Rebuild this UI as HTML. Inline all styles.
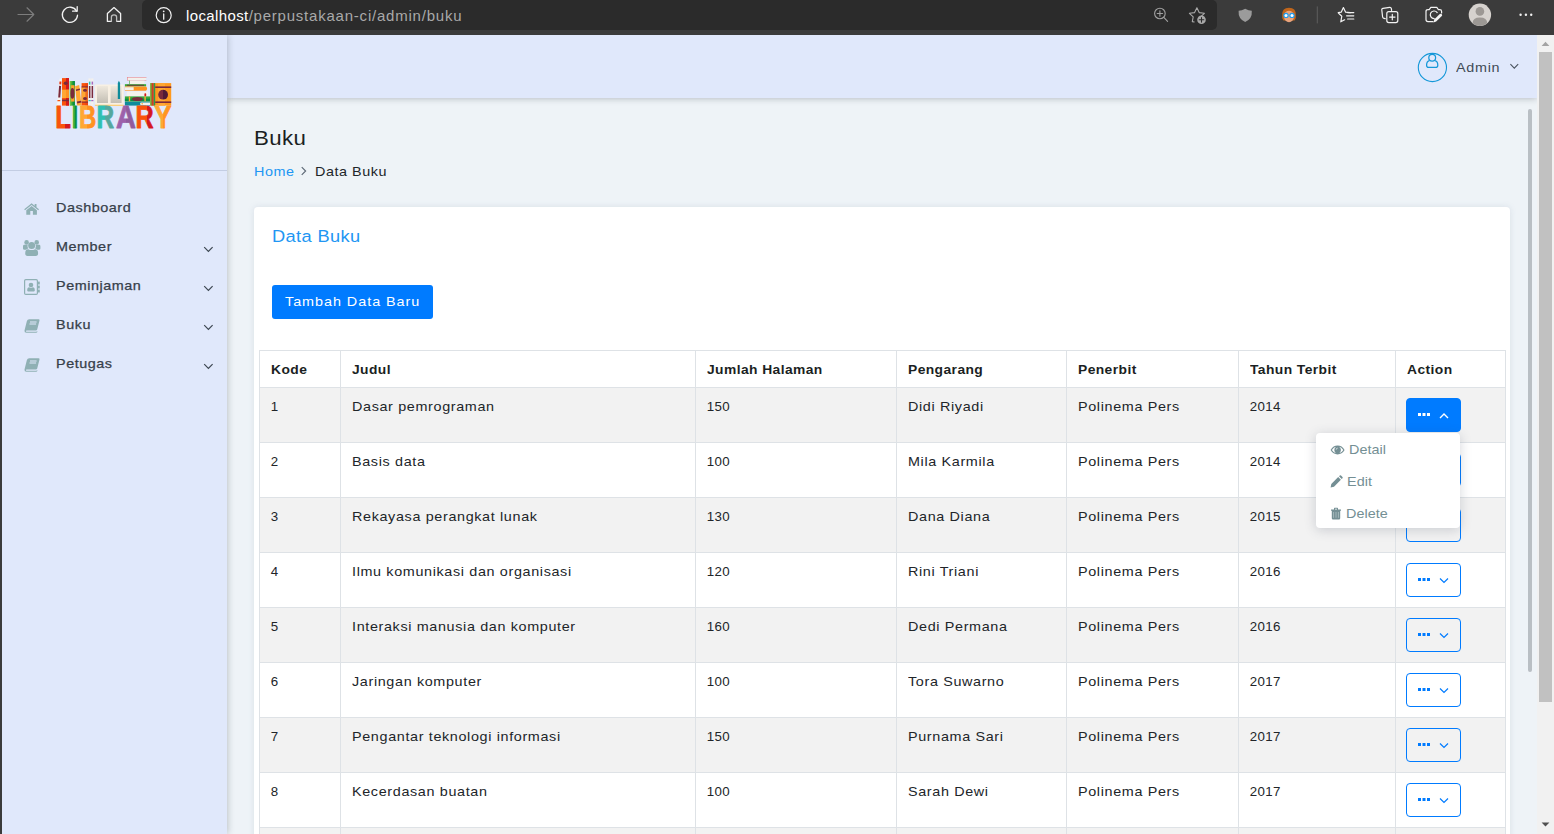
<!DOCTYPE html>
<html lang="id">
<head>
<meta charset="utf-8">
<title>Buku - Perpustakaan</title>
<style>
*{box-sizing:border-box;margin:0;padding:0}
html,body{width:1554px;height:834px;overflow:hidden;background:#eef3f7}
body{font-family:"Liberation Sans",sans-serif;font-size:13.3px;color:#212529;letter-spacing:1.1px;position:relative}
.abs{position:absolute}
/* browser chrome */
#chrome{left:0;top:0;width:1554px;height:35px;background:#3b3b3b}
#addr{left:142px;top:0;width:1075px;height:30px;background:#2b2b2b;border-radius:5px}
#url{left:186px;top:6.5px;font-size:15px;letter-spacing:.78px;color:#a9a9a9;line-height:18px;white-space:nowrap}
#url b{font-weight:normal;color:#fff;letter-spacing:.38px}
#lborder{left:0;top:0;width:2px;height:834px;background:#3b3b3b}
/* sidebar */
#sidebar{left:2px;top:35px;width:225px;height:799px;background:#e0e8fb;box-shadow:0 0 7px rgba(30,40,50,.3)}
#sideline{left:2px;top:170px;width:225px;height:1px;background:#c3cde3}
.mi{left:56px;font-size:13px;font-weight:normal;color:#37404a;letter-spacing:.5px;line-height:20px;white-space:nowrap;-webkit-text-stroke:.25px #37404a}
.mi.w{transform:scaleX(1.105)}
/* header */
#header{left:227px;top:35px;width:1310px;height:63px;background:#e0e8fb;box-shadow:0 0 7px rgba(30,40,50,.32)}
#admin{left:1456px;top:59px;font-size:13.3px;color:#414b55;letter-spacing:.65px;line-height:18px}
/* scrollbars */
#sb{left:1537px;top:35px;width:17px;height:799px;background:#f1f1f1}
#sbthumb{left:1539px;top:52px;width:13px;height:650px;background:#c1c1c1}
#isb{left:1528px;top:109px;width:4px;height:563px;background:#b9bfc4;border-radius:2px}
/* content */
#title{left:254px;top:124px;font-size:20.6px;line-height:28px;color:#1b1f23;letter-spacing:.4px}
#bc{left:254px;top:163px;font-size:13.3px;line-height:18px;white-space:nowrap;letter-spacing:.5px}
#bc a{color:#2196f3;text-decoration:none}
#card{left:254px;top:207px;width:1256px;height:640px;background:#fff;border-radius:4px;box-shadow:0 0 6px rgba(120,140,160,.18)}
#ctitle{left:272px;top:226px;font-size:16.9px;line-height:22px;color:#2196f3;letter-spacing:.35px}
#addbtn{left:272px;top:285px;width:161px;height:34px;background:#007bff;border-radius:3px;color:#fff;font-size:13.3px;letter-spacing:.9px;line-height:34px;text-align:center;white-space:nowrap;padding-left:1px}
table{position:absolute;left:259px;top:350px;width:1247px;border-collapse:collapse;table-layout:fixed}
th,td{border:1px solid #dee2e6;vertical-align:top;text-align:left;padding:8px 0 0 11px;white-space:nowrap;line-height:21px;color:#212529}
th{height:37px;font-weight:bold;letter-spacing:.75px;color:#1b1f23}
td{height:55px;padding-left:10.8px}
tbody tr:nth-child(odd) td{background:#f2f2f2}
.btn{width:55px;height:34px;border:1px solid #007bff;border-radius:4px;left:1406px;background:transparent}
.btn.on{background:#007bff}
.btn svg{position:absolute;left:-1px;top:-1px}
#dd{left:1316px;top:433px;width:144px;height:95px;background:#fff;border-radius:4px;box-shadow:0 2px 12px rgba(60,70,90,.22)}
.di{font-size:13.3px;color:#748f94;letter-spacing:.05px;line-height:18px;white-space:nowrap}

td>span{display:inline-block;transform:scaleX(1.08);transform-origin:0 50%;letter-spacing:.6px}
td>span.n{transform:none;letter-spacing:.3px}
th>span{display:inline-block;transform:scaleX(1.04);transform-origin:0 50%;letter-spacing:.4px}
.w{transform:scaleX(1.08);transform-origin:0 50%}
#addbtn span{display:inline-block;transform:scaleX(1.08);transform-origin:50% 50%}
</style>
</head>
<body>
<!-- content area -->
<div class="abs w" id="title">Buku</div>
<div class="abs w" id="bc"><a>Home</a><svg width="19" height="12" viewBox="1 0 19 12" style="vertical-align:-1px"><path d="M8.2 2.2 L11.8 6 L8.2 9.8" fill="none" stroke="#5f6b78" stroke-width="1.1"/></svg><span>Data Buku</span></div>
<div class="abs" id="card"></div>
<div class="abs w" id="ctitle">Data Buku</div>
<div class="abs" id="addbtn"><span>Tambah Data Baru</span></div>

<table>
<colgroup><col style="width:81px"><col style="width:355px"><col style="width:201px"><col style="width:170px"><col style="width:172px"><col style="width:157px"><col style="width:110px"></colgroup>
<thead><tr><th><span>Kode</span></th><th><span>Judul</span></th><th><span>Jumlah Halaman</span></th><th><span>Pengarang</span></th><th><span>Penerbit</span></th><th><span>Tahun Terbit</span></th><th><span>Action</span></th></tr></thead>
<tbody>
<tr><td><span class="n">1</span></td><td><span>Dasar pemrograman</span></td><td><span class="n">150</span></td><td><span>Didi Riyadi</span></td><td><span>Polinema Pers</span></td><td><span class="n">2014</span></td><td></td></tr>
<tr><td><span class="n">2</span></td><td><span>Basis data</span></td><td><span class="n">100</span></td><td><span>Mila Karmila</span></td><td><span>Polinema Pers</span></td><td><span class="n">2014</span></td><td></td></tr>
<tr><td><span class="n">3</span></td><td><span>Rekayasa perangkat lunak</span></td><td><span class="n">130</span></td><td><span>Dana Diana</span></td><td><span>Polinema Pers</span></td><td><span class="n">2015</span></td><td></td></tr>
<tr><td><span class="n">4</span></td><td><span>Ilmu komunikasi dan organisasi</span></td><td><span class="n">120</span></td><td><span>Rini Triani</span></td><td><span>Polinema Pers</span></td><td><span class="n">2016</span></td><td></td></tr>
<tr><td><span class="n">5</span></td><td><span>Interaksi manusia dan komputer</span></td><td><span class="n">160</span></td><td><span>Dedi Permana</span></td><td><span>Polinema Pers</span></td><td><span class="n">2016</span></td><td></td></tr>
<tr><td><span class="n">6</span></td><td><span>Jaringan komputer</span></td><td><span class="n">100</span></td><td><span>Tora Suwarno</span></td><td><span>Polinema Pers</span></td><td><span class="n">2017</span></td><td></td></tr>
<tr><td><span class="n">7</span></td><td><span>Pengantar teknologi informasi</span></td><td><span class="n">150</span></td><td><span>Purnama Sari</span></td><td><span>Polinema Pers</span></td><td><span class="n">2017</span></td><td></td></tr>
<tr><td><span class="n">8</span></td><td><span>Kecerdasan buatan</span></td><td><span class="n">100</span></td><td><span>Sarah Dewi</span></td><td><span>Polinema Pers</span></td><td><span class="n">2017</span></td><td></td></tr>
<tr><td><span class="n">9</span></td><td></td><td></td><td></td><td></td><td></td><td></td></tr>
</tbody>
</table>

<!-- action buttons -->
<div class="abs btn on" style="top:398px"><svg width="55" height="34"><path d="M12 15h3v3h-3zM16.5 15h3v3h-3zM21 15h3v3h-3z" fill="#fff"/><path d="M34 20 L38 16 L42 20" fill="none" stroke="#fff" stroke-width="1.4"/></svg></div>
<div class="abs btn" style="top:453px"></div>
<div class="abs btn" style="top:508px"></div>
<div class="abs btn" style="top:563px"><svg width="55" height="34"><path d="M12 15h3v3h-3zM16.5 15h3v3h-3zM21 15h3v3h-3z" fill="#007bff"/><path d="M34 15.5 L38 19.5 L42 15.5" fill="none" stroke="#007bff" stroke-width="1.2"/></svg></div>
<div class="abs btn" style="top:618px"><svg width="55" height="34"><path d="M12 15h3v3h-3zM16.5 15h3v3h-3zM21 15h3v3h-3z" fill="#007bff"/><path d="M34 15.5 L38 19.5 L42 15.5" fill="none" stroke="#007bff" stroke-width="1.2"/></svg></div>
<div class="abs btn" style="top:673px"><svg width="55" height="34"><path d="M12 15h3v3h-3zM16.5 15h3v3h-3zM21 15h3v3h-3z" fill="#007bff"/><path d="M34 15.5 L38 19.5 L42 15.5" fill="none" stroke="#007bff" stroke-width="1.2"/></svg></div>
<div class="abs btn" style="top:728px"><svg width="55" height="34"><path d="M12 15h3v3h-3zM16.5 15h3v3h-3zM21 15h3v3h-3z" fill="#007bff"/><path d="M34 15.5 L38 19.5 L42 15.5" fill="none" stroke="#007bff" stroke-width="1.2"/></svg></div>
<div class="abs btn" style="top:783px"><svg width="55" height="34"><path d="M12 15h3v3h-3zM16.5 15h3v3h-3zM21 15h3v3h-3z" fill="#007bff"/><path d="M34 15.5 L38 19.5 L42 15.5" fill="none" stroke="#007bff" stroke-width="1.2"/></svg></div>

<!-- dropdown -->
<div class="abs" id="dd"></div>
<div class="abs di w" style="left:1349px;top:441px">Detail</div>
<div class="abs di w" style="left:1347px;top:473px">Edit</div>
<div class="abs di w" style="left:1346px;top:505px">Delete</div>

<svg class="abs" style="left:1330px;top:445px" width="16" height="10" viewBox="0 0 16 10"><path d="M0.6 5 Q3.2 0.6 7.6 0.6 Q12 0.6 14.6 5 Q12 9.400 7.600 9.400 Q3.200 9.400 0.600 5 Z" fill="#748f94"/><path d="M1.900 5 Q3.800 2 6 1.700 Q4.300 3 4.300 5 Q4.300 7 6 8.300 Q3.800 8 1.900 5 Z M13.300 5 Q11.400 2 9.200 1.700 Q10.900 3 10.900 5 Q10.900 7 9.200 8.300 Q11.400 8 13.300 5 Z" fill="#fff"/><circle cx="7.600" cy="5" r="2.600" fill="#748f94"/><path d="M6.200 4.600 Q6.400 3.200 7.600 3.100" fill="none" stroke="#fff" stroke-width=".7"/></svg>
<svg class="abs" style="left:1330px;top:475px" width="13" height="13" viewBox="0 0 13 13"><path d="M0.600 12.400 L1.300 9 L8.200 2.100 L10.900 4.800 L4 11.700 Z M9 1.300 L9.800 0.500 Q10.400 0 11 0.500 L12.500 2 Q13 2.600 12.500 3.200 L11.700 4 Z" fill="#748f94"/></svg>
<svg class="abs" style="left:1330px;top:507px" width="12" height="13" viewBox="0 0 12 13"><path d="M1 2.600 H4 V1.400 Q4 0.800 4.600 0.800 H7.400 Q8 0.800 8 1.400 V2.600 H11 V3.800 H10.200 V11.200 Q10.200 12.400 9 12.400 H3 Q1.800 12.400 1.800 11.200 V3.800 H1 Z M5 1.700 V2.600 H7 V1.700 Z" fill="#748f94"/><path d="M3.600 5 V10.800 M6 5 V10.800 M8.400 5 V10.800" stroke="#a9bcc0" stroke-width=".9" fill="none"/></svg>

<!-- header -->
<div class="abs" id="header"></div>
<div class="abs w" id="admin">Admin</div>

<svg class="abs" style="left:1417px;top:52px" width="31" height="31" viewBox="0 0 31 31"><circle cx="15.4" cy="15.5" r="14.1" fill="none" stroke="#1497d8" stroke-width="1.1"/><circle cx="15.2" cy="5.8" r="3.4" fill="none" stroke="#1497d8" stroke-width="1.25"/><path d="M12.3 8.6 Q9.6 9.4 9.6 13.2 Q9.6 15.4 11.6 15.4 H18.8 Q20.8 15.4 20.8 13.2 Q20.8 9.4 18.1 8.6" fill="none" stroke="#1497d8" stroke-width="1.25"/></svg>
<svg class="abs" style="left:1509px;top:63px" width="11" height="7"><path d="M1.4 1.2 L5.3 5.1 L9.2 1.2" fill="none" stroke="#4a535e" stroke-width="1.1"/></svg>

<!-- sidebar -->
<div class="abs" id="sidebar"></div>
<div class="abs" id="sideline"></div>
<div class="abs mi w" style="top:198px">Dashboard</div>
<div class="abs mi w" style="top:237px">Member</div>
<div class="abs mi w" style="top:276px">Peminjaman</div>
<div class="abs mi w" style="top:315px">Buku</div>
<div class="abs mi w" style="top:354px">Petugas</div>



<!-- logo -->
<svg class="abs" style="left:52px;top:72px" width="124" height="60" viewBox="52 72 124 60">
<defs>
<linearGradient id="gL"><stop offset="62%" stop-color="#f9530b"/><stop offset="62%" stop-color="#d4191d"/></linearGradient>
<linearGradient id="gI"><stop offset="25%" stop-color="#8fce5a"/><stop offset="25%" stop-color="#3aaa35"/><stop offset="60%" stop-color="#3aaa35"/><stop offset="60%" stop-color="#0b8f44"/></linearGradient>
<linearGradient id="gB"><stop offset="48%" stop-color="#ffa733"/><stop offset="48%" stop-color="#ff9220"/></linearGradient>
<linearGradient id="gR"><stop offset="48%" stop-color="#2fbfb3"/><stop offset="48%" stop-color="#55a79e"/></linearGradient>
<linearGradient id="gA"><stop offset="50%" stop-color="#9d61ab"/><stop offset="50%" stop-color="#915c9d"/></linearGradient>
<linearGradient id="gY"><stop offset="50%" stop-color="#ffa733"/><stop offset="50%" stop-color="#ff9422"/></linearGradient>
<linearGradient id="gP" x1="0" y1="0" x2="0" y2="1"><stop offset="0" stop-color="#efe9dd"/><stop offset="1" stop-color="#c3beb4"/></linearGradient>
<linearGradient id="gC"><stop offset="50%" stop-color="#7a2a3c"/><stop offset="50%" stop-color="#511a36"/></linearGradient>
</defs>
<!-- books row -->
<path d="M59.6 78.4 L61.7 78.6 L60 105.600 H57 Z" fill="#f6f3ee"/><path d="M59.100 85.800 L61.100 86 L60.300 97.600 L58.200 97.600 Z" fill="#7a2a3c"/><path d="M59.500 81.400 L61.400 81.600 L61.200 84.400 L59.300 84.200 Z" fill="#e2381c"/><path d="M57.500 100 L60.300 100 L60.200 101.300 L57.400 101.300 Z" fill="#f9530b"/>
<rect x="62" y="78.1" width="7" height="27.5" fill="#f9530b"/><rect x="66" y="78.1" width="3" height="27.5" fill="#d4191d"/><rect x="62" y="89.7" width="7" height="8.3" fill="#ffa733"/><rect x="66" y="89.7" width="3" height="8.3" fill="#ff9220"/><ellipse cx="65.7" cy="83.3" rx="2" ry="1.7" fill="#7a2a3c"/><rect x="62" y="99.6" width="7" height="1.6" fill="#7a2a3c"/>
<rect x="69.8" y="81.1" width="5.1" height="24.5" fill="#3aaa35"/><rect x="72.6" y="81.1" width="2.3" height="24.5" fill="#0b8f44"/><rect x="70.500" y="85.200" width="4" height="16.400" fill="#ffa028"/><rect x="69.800" y="81.100" width="1.500" height="24.500" fill="#7fc74f" opacity=".7"/><ellipse cx="72.400" cy="93.400" rx="2" ry="5.400" fill="#7a2a3c"/>
<path d="M75.1 86.2 L79.2 85 L81.6 105.6 H77 Z" fill="#ffa733"/><path d="M75.9 89.6 L79.8 88.6 L80 90 L76.1 91 Z M77 101.6 L81.2 100.8 L81.4 102.6 L77.2 103.4 Z" fill="#7a2a3c"/>
<rect x="81.6" y="83.1" width="6.4" height="22.5" fill="#f9530b"/><rect x="81.6" y="87.4" width="6.4" height="14.2" fill="#ffa733"/><rect x="85.4" y="83.1" width="2.6" height="22.5" fill="#e23a12" opacity=".55"/><ellipse cx="85" cy="90.2" rx="2" ry="1.5" fill="#7a2a3c"/><ellipse cx="85" cy="98.4" rx="2" ry="1.5" fill="#7a2a3c"/><rect x="81.6" y="86.4" width="6.4" height="1" fill="#7a2a3c"/><rect x="81.6" y="101.6" width="6.4" height="1" fill="#7a2a3c"/>
<rect x="88.5" y="78.4" width="2.2" height="27.2" fill="#f4f1ec"/><rect x="91.2" y="78.4" width="2.2" height="27.2" fill="#f4f1ec"/><rect x="88.9" y="86" width="1.5" height="12" fill="#7a2a3c"/><rect x="91.6" y="86" width="1.5" height="12" fill="#7a2a3c"/><rect x="88.9" y="81.6" width="1.5" height="3" fill="#2fbfb3"/><rect x="91.6" y="81.6" width="1.5" height="3" fill="#a56bc0"/><rect x="88.5" y="100" width="2.2" height="1.2" fill="#2fbfb3"/><rect x="91.2" y="100" width="2.2" height="1.2" fill="#a56bc0"/>
<!-- open book -->
<rect x="94.9" y="84.4" width="28.8" height="21.2" rx="1" fill="#f8f0e3"/><rect x="94.9" y="104.8" width="28.8" height="0.9" fill="#ffc44d"/><rect x="97" y="86" width="11" height="17" fill="url(#gP)"/><rect x="110.6" y="86" width="11" height="17" fill="url(#gP)"/>
<path d="M117.8 83 L118.9 80.8 L120.1 83 V98.9 H117.8 Z" fill="#0f8b9a"/>
<!-- stack -->
<path d="M127 77.1 H146.4 V77.8 H127.8 V79.9 H146.4 V80.6 H127 Z" fill="#e98a92"/><rect x="127.8" y="77.8" width="18.2" height="2.1" fill="#f4f1ec"/>
<rect x="129.6" y="80.6" width="14.8" height="3.5" fill="#f4f1ec"/><rect x="129" y="80.6" width="0.6" height="3.5" fill="#3aaa35"/>
<rect x="124.9" y="84.2" width="21.2" height="2.2" fill="#3aaa35"/><rect x="127" y="84.8" width="17" height="0.9" fill="#7a2a3c"/>
<path d="M124.9 86.6 H146 Q148.2 88.7 146 90.8 H124.9 Z" fill="#ff9220"/><rect x="124.9" y="87.2" width="8.8" height="3" fill="#f4f1ec"/>
<path d="M127 91.4 H147.8 Q148.6 93.7 147.8 96 H127 Q126.2 93.7 127 91.4 Z" fill="#f4f1ec"/><rect x="144.4" y="93.2" width="1.8" height="3.4" rx=".8" fill="#d4191d"/>
<rect x="124.9" y="96.4" width="25.1" height="5" fill="#3aaa35"/><rect x="124.9" y="98.6" width="25.1" height="2.8" fill="#0b8f44"/><rect x="128.8" y="96.4" width="1.4" height="5" fill="#ffa733"/><rect x="144.4" y="96.4" width="1.4" height="5" fill="#ffa733"/><ellipse cx="137.4" cy="99" rx="5.6" ry="2" fill="#7a2a3c"/>
<rect x="124.9" y="101.8" width="25.1" height="3.8" fill="#0f8b9a"/><path d="M140.6 102.4 H150 V105 H140.6 Q139.4 103.7 140.6 102.4 Z" fill="#f4f1ec"/><circle cx="142.2" cy="103.8" r=".8" fill="#ffa733"/>
<!-- big orange book -->
<rect x="150.4" y="83.1" width="20.8" height="22.5" fill="#ff9a1f"/><rect x="158" y="83.1" width="7" height="22.5" fill="#ffa733"/><rect x="150.4" y="83.1" width="1.3" height="22.5" fill="#3aaa35"/><rect x="151.7" y="83.1" width="2" height="22.5" fill="#d4382a"/><rect x="153.7" y="83.1" width="1.5" height="22.5" fill="#2e9a4c"/>
<rect x="155.2" y="86.4" width="16" height="1.6" fill="#7a2a3c"/><rect x="155.2" y="101.4" width="16" height="1.6" fill="#7a2a3c"/><circle cx="163.1" cy="94.7" r="4.9" fill="url(#gC)"/>
<!-- LIBRARY letters -->
<g font-family="Liberation Sans, sans-serif" font-weight="bold" font-size="31" letter-spacing="0" stroke-width=".8" stroke-linejoin="round">
<text transform="translate(55.3 127.700) scale(0.825 1)" fill="url(#gL)" stroke="url(#gL)">L</text>
<text transform="translate(71.7 127.700) scale(0.731 1)" fill="url(#gI)" stroke="url(#gI)">I</text>
<text transform="translate(79 127.700) scale(0.773 1)" fill="url(#gB)" stroke="url(#gB)">B</text>
<text transform="translate(96.6 127.700) scale(0.788 1)" fill="url(#gR)" stroke="url(#gR)">R</text>
<text transform="translate(116 127.700) scale(0.887 1)" fill="url(#gA)" stroke="url(#gA)">A</text>
<text transform="translate(135.5 127.700) scale(0.809 1)" fill="url(#gL)" stroke="url(#gL)">R</text>
<text transform="translate(154.2 127.700) scale(0.835 1)" fill="url(#gY)" stroke="url(#gY)">Y</text>
</g>
</svg>

<!-- sidebar icons -->
<svg class="abs" style="left:24px;top:203px" width="16" height="12" viewBox="0 0 16 12"><path d="M7.6 0.2 L0.2 6.3 L1 7.3 L7.6 1.9 L14.2 7.3 L15 6.3 L12.5 4.2 V0.9 H10.7 V2.7 Z" fill="#8fb0b4"/><path d="M7.6 2.9 L2.3 7.3 V11.7 H6.3 V8.1 H8.9 V11.7 H12.9 V7.3 Z" fill="#8fb0b4"/></svg>
<svg class="abs" style="left:23px;top:240px" width="18" height="16" viewBox="0 0 18 16"><g fill="#8fb0b4"><circle cx="3.6" cy="2.4" r="2.3"/><circle cx="13.7" cy="2.4" r="2.3"/><circle cx="8.65" cy="5.4" r="3.5"/><path d="M0 6.2 Q0 4.8 1.4 4.8 H4.6 Q4.2 7.4 5.3 8.6 Q3.6 8.9 3.2 9.8 H1.4 Q0 9.8 0 8.4 Z"/><path d="M17.4 6.2 Q17.4 4.8 16 4.8 H12.8 Q13.2 7.4 12.1 8.6 Q13.8 8.9 14.2 9.8 H16 Q17.4 9.8 17.4 8.4 Z"/><path d="M2.2 13.2 Q2.2 9.2 5.2 9.2 Q8.65 11 12.1 9.2 Q15.1 9.2 15.1 13.2 Q15.1 16 12.9 16 H4.4 Q2.2 16 2.2 13.2 Z"/></g></svg>
<svg class="abs" style="left:24px;top:279px" width="16" height="16" viewBox="0 0 16 16"><rect x="0.6" y="0.6" width="12.8" height="14.8" rx="1.2" fill="none" stroke="#8fb0b4" stroke-width="1.2"/><g fill="#8fb0b4"><circle cx="7" cy="6" r="2.3"/><path d="M3.2 11.6 Q3.2 8.3 5.2 8.3 Q7 9.4 8.8 8.3 Q10.8 8.3 10.8 11.6 Q10.8 12.4 10 12.4 H4 Q3.2 12.4 3.2 11.6 Z"/><rect x="14" y="2.6" width="1.8" height="2.8" rx=".5"/><rect x="14" y="6.6" width="1.8" height="2.8" rx=".5"/><rect x="14" y="10.6" width="1.8" height="2.8" rx=".5"/></g></svg>
<svg class="abs bk" style="left:24px;top:319px" width="16" height="14" viewBox="0 0 16 14"><path d="M5.2 0.2 H14.6 Q15.8 0.2 15.5 1.4 L13.2 10.6 Q12.9 11.6 11.8 11.6 H2.6 Q1.9 11.6 2 12.3 Q2.1 12.8 2.8 12.8 H12 Q12.6 12.8 12.9 12.2 L13.6 12.5 Q13.2 13.8 12 13.8 H2.4 Q0.2 13.8 0.5 11.4 L2.9 1.9 Q3.4 0.2 5.2 0.2 Z" fill="#8fb0b4"/><path d="M6 3 H12.6 M5.5 5 H12.1" stroke="#e0e8fb" stroke-width="1" fill="none"/></svg>
<svg class="abs bk" style="left:24px;top:358px" width="16" height="14" viewBox="0 0 16 14"><path d="M5.2 0.2 H14.6 Q15.8 0.2 15.5 1.4 L13.2 10.6 Q12.9 11.6 11.8 11.6 H2.6 Q1.9 11.6 2 12.3 Q2.1 12.8 2.8 12.8 H12 Q12.6 12.8 12.9 12.2 L13.6 12.5 Q13.2 13.8 12 13.8 H2.4 Q0.2 13.8 0.5 11.4 L2.9 1.9 Q3.4 0.2 5.2 0.2 Z" fill="#8fb0b4"/><path d="M6 3 H12.6 M5.5 5 H12.1" stroke="#e0e8fb" stroke-width="1" fill="none"/></svg>
<!-- sidebar chevrons -->
<svg class="abs" style="left:203px;top:246px" width="11" height="7"><path d="M1.2 1.2 L5.4 5.4 L9.6 1.2" fill="none" stroke="#3d4752" stroke-width="1.2"/></svg>
<svg class="abs" style="left:203px;top:285px" width="11" height="7"><path d="M1.2 1.2 L5.4 5.4 L9.6 1.2" fill="none" stroke="#3d4752" stroke-width="1.2"/></svg>
<svg class="abs" style="left:203px;top:324px" width="11" height="7"><path d="M1.2 1.2 L5.4 5.4 L9.6 1.2" fill="none" stroke="#3d4752" stroke-width="1.2"/></svg>
<svg class="abs" style="left:203px;top:363px" width="11" height="7"><path d="M1.2 1.2 L5.4 5.4 L9.6 1.2" fill="none" stroke="#3d4752" stroke-width="1.2"/></svg>

<!-- scrollbars -->
<div class="abs" id="isb"></div>
<div class="abs" id="sb"></div>
<div class="abs" id="sbthumb"></div>

<svg class="abs" style="left:1537px;top:35px" width="17" height="799"><path d="M4.6 11 L8.500 6.800 L12.400 11 Z" fill="#a3a3a3"/><path d="M4.600 787.400 L8.500 791.600 L12.400 787.400 Z" fill="#505050"/></svg>
<!-- browser chrome -->
<div class="abs" id="chrome"></div>
<div class="abs" id="addr"></div>
<div class="abs" id="url"><b>localhost</b>/perpustakaan-ci/admin/buku</div>

<!-- chrome icons -->
<svg class="abs" style="left:0;top:0" width="1554" height="35" viewBox="0 0 1554 35" fill="none" stroke-linecap="round" stroke-linejoin="round">
<!-- forward -->
<path d="M18 14.5 H33.6 M27 7.8 L33.8 14.5 L27 21.2" stroke="#7d7d7d" stroke-width="1.2"/>
<!-- refresh -->
<path d="M76.6 11.2 A7.6 7.6 0 1 0 77.5 15.2" stroke="#f2f2f2" stroke-width="1.3"/><path d="M72.6 11.2 H77.2 V6.6" stroke="#f2f2f2" stroke-width="1.3"/>
<!-- home -->
<path d="M111.400 21.400 H107.400 V13.400 L114 7.600 L120.600 13.400 V21.400 H116.600" stroke="#f2f2f2" stroke-width="1.300"/><path d="M116.600 21.400 V17 Q116.600 14.800 114 14.800 Q111.400 14.800 111.400 17 V21.400" stroke="#bdbdbd" stroke-width="1.300"/>
<!-- info -->
<circle cx="163.7" cy="15.2" r="7.5" stroke="#f2f2f2" stroke-width="1.2"/><path d="M163.7 14 V19.2" stroke="#f2f2f2" stroke-width="1.3"/><circle cx="163.7" cy="11.3" r=".9" fill="#f2f2f2" stroke="none"/>
<!-- zoom -->
<circle cx="1159.9" cy="13.5" r="5.3" stroke="#a0a0a0" stroke-width="1.1"/><path d="M1163.8 17.4 L1167.6 21.4 M1157.2 13.5 H1162.6 M1159.9 10.8 V16.2" stroke="#a0a0a0" stroke-width="1.1"/>
<!-- star plus -->
<path d="M1196.9 7.8 L1199.2 12.6 L1204.4 13.3 L1200.8 16.6 M1194.2 22 L1192.3 21.6 L1193.2 16.9 L1189.4 13.3 L1194.6 12.6 L1196.9 7.8" stroke="#a8a8a8" stroke-width="1.1"/>
<circle cx="1201.5" cy="19.8" r="4.3" fill="#a8a8a8" stroke="none"/><path d="M1199.2 19.8 H1203.8 M1201.5 17.5 V22.1" stroke="#2b2b2b" stroke-width="1.1"/>
<!-- shield -->
<path d="M1245.2 8.8 Q1248.6 10.8 1251.8 10.8 Q1252.4 19 1245.2 22 Q1238 19 1238.6 10.8 Q1241.8 10.8 1245.2 8.8 Z" fill="#9b9b9b" stroke="none"/>
<!-- face -->
<g stroke="none"><path d="M1282.2 15 Q1282 7.8 1289 7.8 Q1296 7.8 1295.8 15 Q1296.4 18.6 1294.6 20.6 L1283.4 20.6 Q1281.600 18.600 1282.200 15 Z" fill="#c0661c"/><ellipse cx="1289" cy="16.4" rx="5" ry="5.9" fill="#e9a37c"/><path d="M1283.600 12.400 Q1289 8.800 1294.400 12.400 L1294.400 10.400 Q1289 7 1283.600 10.400 Z" fill="#c0661c"/><circle cx="1286" cy="15.4" r="2.7" fill="#1d9bf0"/><circle cx="1292" cy="15.400" r="2.700" fill="#1d9bf0"/><circle cx="1286" cy="15.400" r="1.500" fill="#fff"/><circle cx="1292" cy="15.400" r="1.500" fill="#fff"/></g>
<!-- separator -->
<path d="M1317.300 6.800 V23" stroke="#5e5e5e" stroke-width="1"/>
<!-- favorites -->
<path d="M1350.200 12.600 L1345.600 12.200 L1343.400 7.600 L1341.200 12.200 L1338.200 12.600 L1338.400 13 L1341.800 16.200 L1340.800 21.800 L1344.600 19.800" stroke="#f2f2f2" stroke-width="1.200"/><path d="M1347.600 12.600 H1353.800 M1346.600 15.800 H1353.800 M1347.600 19 H1353.800" stroke="#f2f2f2" stroke-width="1.200"/>
<!-- collections -->
<path d="M1385.200 18.600 L1384 18.400 Q1382.800 18.200 1382.600 17 L1381.800 10 Q1381.600 8.600 1383 8.400 L1389.600 7.400 Q1391 7.200 1391.400 8.600 L1391.600 10.400" stroke="#f2f2f2" stroke-width="1.200"/><rect x="1386.800" y="11.600" width="11" height="11" rx="2" stroke="#f2f2f2" stroke-width="1.200"/><path d="M1389.600 17.100 H1395 M1392.300 14.400 V19.800" stroke="#f2f2f2" stroke-width="1.200"/>
<!-- screenshot -->
<path d="M1433 21.600 H1428 Q1426 21.600 1426 19.600 V11.400 Q1426 9.600 1428 9.600 H1429.200 L1430.800 7.400 H1436.800 L1438.400 9.600 H1439.800 Q1441.600 9.600 1441.600 11.400 V13" stroke="#f2f2f2" stroke-width="1.200"/><path d="M1437.200 12.600 A3.800 3.800 0 1 0 1434.200 18.600" stroke="#f2f2f2" stroke-width="1.200"/><path d="M1433.400 22.600 L1434.200 19.600 L1439.800 14 Q1440.800 13.200 1441.800 14.200 Q1442.600 15.200 1441.800 16 L1436.200 21.600 Z" fill="#f2f2f2" stroke="none"/>
<!-- profile -->
<g stroke="none"><circle cx="1479.900" cy="14.800" r="11.200" fill="#d6d2ce"/><circle cx="1479.900" cy="11.400" r="4.300" fill="#9c9894"/><path d="M1472.600 23.200 Q1472.600 17.600 1479.900 17.600 Q1487.200 17.600 1487.200 23.200 Q1483.800 26 1479.900 26 Q1476 26 1472.600 23.200 Z" fill="#9c9894"/></g>
<!-- ellipsis -->
<g fill="#f2f2f2" stroke="none"><circle cx="1520.600" cy="14.800" r="1.200"/><circle cx="1525.900" cy="14.800" r="1.200"/><circle cx="1531.200" cy="14.800" r="1.200"/></g>
</svg>
<div class="abs" id="lborder"></div>
</body>
</html>
